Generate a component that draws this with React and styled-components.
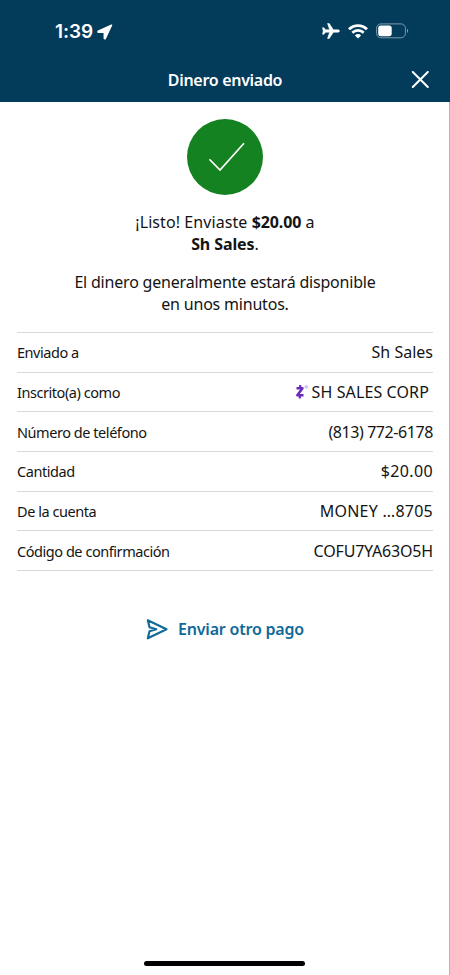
import React from 'react';
import styled, { createGlobalStyle } from 'styled-components';

const rows = [
  { label: 'Enviado a', value: 'Sh Sales' },
  { label: 'Inscrito(a) como', value: 'SH SALES CORP', spacing: 0.12, zelle: true },
  { label: 'Número de teléfono', value: '(813) 772-6178', spacing: -0.42 },
  { label: 'Cantidad', value: '$20.00', spacing: 0.35 },
  { label: 'De la cuenta', value: 'MONEY …8705', spacing: 0.25 },
  { label: 'Código de confirmación', value: 'COFU7YA63O5H', spacing: -0.18 }
];

function StatusBar() {
  return (
    <S.StatusBar>
      <S.Clock>
        <span>1:39</span>
        <svg width="16" height="16" viewBox="0 0 16 16" fill="#fff" stroke="#fff" strokeWidth="1.5" strokeLinejoin="round">
          <path d="M14.5 1.2 1.2 7.3c-.5.3-.4 1 .2 1h5.900v6c0 .6.7.7 1 .2L14.500 1.200Z" />
        </svg>
      </S.Clock>
      <S.StatusIcons>
        <svg width="18" height="16" viewBox="0 0 18 16" fill="#fff" stroke="#fff" strokeWidth="0.5">
          <path d="M17.6 8c0-.8-1.2-1.3-2.200-1.300h-4L7.300.5H5.500l2.100 6.200H3.500L2 4.700H.5L1.200 8 .5 11.300H2l1.500-2h4.100L5.500 15.500h1.800l4.100-6.200h4c1 0 2.200-.5 2.200-1.300Z" />
        </svg>
        <svg width="20" height="15" viewBox="0 0 20 15" fill="none" stroke="#fff" strokeWidth="2.7">
          <path d="M1 5.3a12.7 12.7 0 0 1 18 0" />
          <path d="M4.3 8.7a8.1 8.1 0 0 1 11.4 0" />
          <path d="M10 14.4 6.9 11.4a4.4 4.4 0 0 1 6.2 0Z" fill="#fff" stroke="none" />
        </svg>
        <svg width="33" height="16" viewBox="0 0 33 16">
          <rect x="0.6" y="0.9" width="28.8" height="13.9" rx="4.3" fill="none" stroke="#7f9bae" />
          <rect x="2.2" y="2.5" width="13.5" height="10.7" rx="2.6" fill="#fff" />
          <path d="M31 5.8c1.6.7 1.6 3.5 0 4.2Z" fill="#7f9bae" />
        </svg>
      </S.StatusIcons>
    </S.StatusBar>
  );
}

function ZelleMark() {
  return (
    <svg width="16" height="16" viewBox="0 0 16 16" fill="none">
      <path d="M5.2 1v2.5M4.8 12v2.600" stroke="#6a2bbd" strokeWidth="2.2" />
      <path d="M1.5 4.300h6L2.300 11.200h6.200" stroke="#6a2bbd" strokeWidth="2.500" strokeLinejoin="round" />
      <circle cx="11.3" cy="2.9" r="1.3" fill="#e2d6f0" stroke="#c9b2e4" />
    </svg>
  );
}

function App() {
  return (
    <>
      <GlobalStyle />
      <S.Screen>
        <S.Header>
          <StatusBar />
          <S.TitleBar>
            <S.Title>Dinero enviado</S.Title>
            <S.Close aria-label="Cerrar">
              <svg width="18" height="18" viewBox="0 0 18 18" stroke="#fff" strokeWidth="2" strokeLinecap="round">
                <path d="M1.8 1 16.800 16M16.800 1 1.800 16" />
              </svg>
            </S.Close>
          </S.TitleBar>
        </S.Header>
        <S.Main>
          <S.Check>
            <svg width="36" height="30" viewBox="0 0 36 30" fill="none" stroke="#fff" strokeWidth="1.7">
              <path d="M.4 17.300 11 28 35 1.200" />
            </svg>
          </S.Check>
          <S.Message $spacing={0.08}>
            ¡Listo! Enviaste <b>$20.00</b> a<br />
            <b>Sh Sales</b>.
          </S.Message>
          <S.Message $spacing={-0.2}>
            El dinero generalmente estará disponible
            <br />
            en unos minutos.
          </S.Message>
          <S.Details>
            {rows.map((row) => (
              <S.Row key={row.label}>
                <S.Label>{row.label}</S.Label>
                <S.Value $inset={row.zelle} $spacing={row.spacing}>
                  {row.zelle && <ZelleMark />}
                  <span>{row.value}</span>
                </S.Value>
              </S.Row>
            ))}
          </S.Details>
          <S.Again>
            <svg width="22" height="23" viewBox="0 0 22 23" fill="none" stroke="#106a97" strokeWidth="2.1" strokeLinejoin="round">
              <path d="M1.800 3.200 20.500 12.300 1.800 21.300 3.500 14.300 10.300 12.300 3.500 10.200Z" />
            </svg>
            <span>Enviar otro pago</span>
          </S.Again>
        </S.Main>
        <S.HomeBar />
      </S.Screen>
    </>
  );
}

export default App;

const GlobalStyle = createGlobalStyle`
  body {
    margin: 0;
    background: #fff;
  }
`;

const S = {
  Screen: styled.div`
    display: flex;
    flex-direction: column;
    box-sizing: border-box;
    width: 450px;
    height: 975px;
    border-right: 1px solid #b4b4b4;
    color: #141414;
    font-family: 'Noto Sans', 'Open Sans', sans-serif;
  `,
  Header: styled.header`
    height: 102px;
    margin-right: -1px;
    background: #033b5b;
    color: #fff;
  `,
  StatusBar: styled.div`
    display: flex;
    justify-content: space-between;
    align-items: center;
    height: 60px;
    padding: 2px 41px 0 55px;
    box-sizing: border-box;
  `,
  Clock: styled.div`
    display: flex;
    align-items: center;
    gap: 4px;
    padding-top: 1px;
    font: 600 19px/24px Inter, sans-serif;
    letter-spacing: -0.1px;
  `,
  StatusIcons: styled.div`
    display: flex;
    align-items: center;
    gap: 8px;
  `,
  TitleBar: styled.div`
    display: grid;
    grid-template-columns: 39px 1fr 39px;
    align-items: center;
    height: 39px;
  `,
  Title: styled.h1`
    grid-column: 2;
    margin: 0;
    font-size: 16px;
    font-weight: 600;
    line-height: 24px;
    letter-spacing: -0.3px;
    text-align: center;
  `,
  Close: styled.button`
    display: flex;
    padding: 0;
    border: 0;
    background: none;
  `,
  Main: styled.main`
    display: flex;
    flex: 1;
    flex-direction: column;
    padding: 17px 16px 0 17px;
  `,
  Check: styled.div`
    display: flex;
    align-items: center;
    justify-content: center;
    align-self: center;
    width: 76px;
    height: 76px;
    box-sizing: border-box;
    padding-left: 3px;
    margin-bottom: 17px;
    border-radius: 50%;
    background: #148220;
  `,
  Message: styled.p`
    margin: 0 0 17px;
    font-size: 16px;
    line-height: 21.7px;
    letter-spacing: ${({ $spacing }) => $spacing}px;
    text-align: center;
    b {
      font-weight: 700;
      letter-spacing: -0.1px;
    }
  `,
  Details: styled.dl`
    margin: -1px 0 0;
    border-top: 1px solid #d8d8d8;
  `,
  Row: styled.div`
    display: flex;
    justify-content: space-between;
    align-items: center;
    height: 39.7px;
    box-sizing: border-box;
    border-bottom: 1px solid #d8d8d8;
  `,
  Label: styled.dt`
    font-size: 14.5px;
    letter-spacing: -0.45px;
  `,
  Value: styled.dd`
    display: flex;
    align-items: center;
    margin: 0;
    padding-right: ${({ $inset }) => ($inset ? '4px' : '0')};
    font-size: 16px;
    letter-spacing: ${({ $spacing = 0 }) => $spacing}px;
  `,
  Again: styled.button`
    display: flex;
    align-items: center;
    align-self: center;
    gap: 10px;
    margin-top: 46px;
    padding: 0;
    border: 0;
    background: none;
    color: #106a97;
    font: 600 16px/24px 'Noto Sans', 'Open Sans', sans-serif;
    letter-spacing: -0.2px;
  `,
  HomeBar: styled.div`
    align-self: center;
    width: 161px;
    height: 5px;
    margin-bottom: 9px;
    border-radius: 3px;
    background: #000;
  `
};
